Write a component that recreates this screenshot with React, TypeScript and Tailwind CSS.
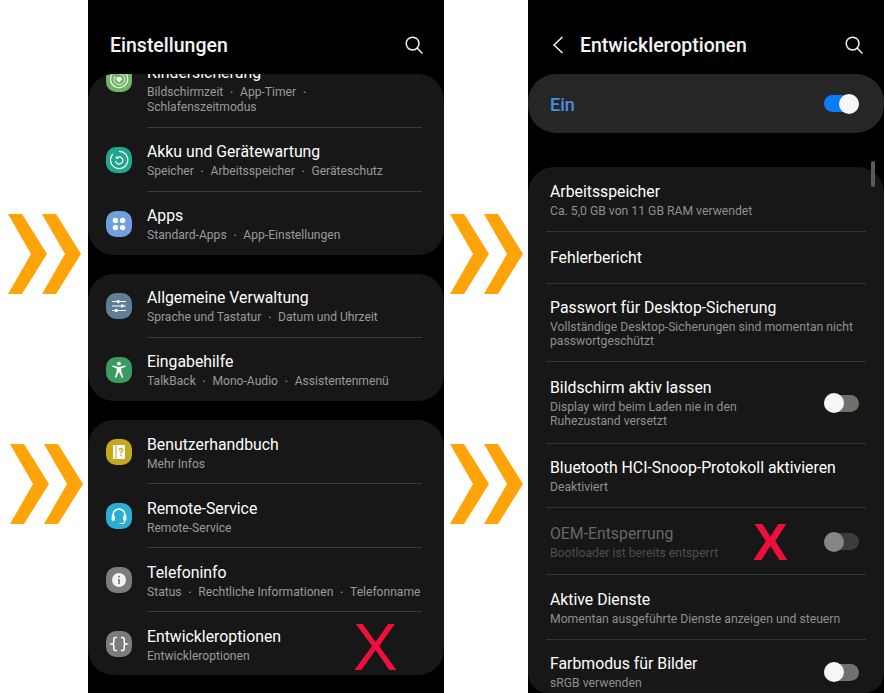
import type { ReactNode } from 'react';

function Chevrons({ className }: { className: string }) {
  return (
    <svg className={className} width="73" height="80" viewBox="0 0 73 80" fill="#ffa408">
      <polygon points="0,0 14,0 39,40 14,80 0,80 23,40" />
      <polygon points="34,0 48,0 73,40 48,80 34,80 57,40" />
    </svg>
  );
}

function SearchIcon() {
  return (
    <svg width="18" height="18" viewBox="0 0 18 18" fill="none" stroke="#f2f2f2" strokeWidth="1.5">
      <circle cx="7.6" cy="7.6" r="6.4" />
      <path d="M12.3 12.3 L17 17" strokeLinecap="round" />
    </svg>
  );
}

function AppIcon({ color, children }: { color: string; children: ReactNode }) {
  return (
    <div className={`w-[26px] h-[26px] rounded-[10px] shrink-0 flex items-center justify-center ${color}`}>
      <svg width="26" height="26" viewBox="0 0 26 26" fill="none" stroke="white" strokeWidth="1.3">
        {children}
      </svg>
    </div>
  );
}

const icons = {
  family: (
    <>
      <path d="M6.5 7.5 A8.6 8.6 0 1 0 13 4.4" opacity="0.85" />
      <path d="M9 10 A5.4 5.4 0 1 0 13 7.8" opacity="0.85" strokeWidth="1" />
      <path d="M13 16.4 L10.2 13.4 A1.9 1.9 0 0 1 13 11.2 A1.9 1.9 0 0 1 15.8 13.4 Z" fill="white" stroke="none" />
    </>
  ),
  care: (
    <>
      <path d="M7 7 A8.6 8.6 0 1 0 13 4.4" />
      <path d="M10.5 11 A3.6 3.6 0 1 1 9.6 14" />
      <path d="M10 9.5 L10.4 11.6 L12.6 11.2" strokeWidth="1" />
    </>
  ),
  apps: (
    <g fill="white" stroke="none">
      <circle cx="9.4" cy="9.4" r="2.7" />
      <circle cx="16.6" cy="9.4" r="2.7" />
      <circle cx="9.4" cy="16.6" r="2.7" />
      <circle cx="16.6" cy="16.6" r="2.7" />
    </g>
  ),
  general: (
    <>
      <path d="M6 8.5 H20 M6 13 H20 M6 17.5 H20" strokeWidth="1" />
      <g fill="white" stroke="none">
        <rect x="11" y="7" width="2.4" height="3" />
        <rect x="15" y="11.5" width="2.4" height="3" />
        <rect x="9" y="16" width="2.4" height="3" />
      </g>
    </>
  ),
  access: (
    <g fill="white" stroke="none">
      <circle cx="13" cy="6.6" r="1.9" />
      <path d="M6 9.4 L6.5 8.4 L13 10 L19.5 8.4 L20 9.4 L15.2 11.6 L15.4 14.6 L17.2 20.4 L15.8 20.8 L13.4 15.6 H12.6 L10.2 20.8 L8.8 20.4 L10.6 14.6 L10.8 11.6 Z" />
    </g>
  ),
  manual: (
    <>
      <path d="M7 6 H19 V20 H7 Z" fill="white" stroke="none" />
      <path d="M10 6 V20" stroke="#c4a91c" strokeWidth="1" />
      <text x="15" y="16.5" textAnchor="middle" fontSize="10" fontWeight="700" fontFamily="Roboto, sans-serif" fill="#c4a91c" stroke="none">?</text>
    </>
  ),
  remote: (
    <>
      <path d="M7 15 V12 A6 6 0 0 1 19 12 V15" strokeWidth="1.7" />
      <rect x="5.6" y="12.4" width="3.4" height="5.4" rx="1.2" fill="white" stroke="none" />
      <rect x="17" y="12.4" width="3.4" height="5.4" rx="1.2" fill="white" stroke="none" />
      <path d="M18.6 17.5 V19 A1.5 1.5 0 0 1 17 20.4 H13.5" strokeWidth="1" />
    </>
  ),
  info: (
    <>
      <circle cx="13" cy="13" r="7" fill="#f2f2f2" stroke="none" />
      <circle cx="13" cy="9.8" r="1" fill="#7c7c7c" stroke="none" />
      <path d="M13 12 V17" stroke="#7c7c7c" strokeWidth="1.7" />
    </>
  ),
  dev: (
    <>
      <path d="M11 6.5 H9.4 A1.6 1.6 0 0 0 7.8 8.1 V11 A1.9 1.9 0 0 1 5.4 13 A1.9 1.9 0 0 1 7.8 15 V17.9 A1.6 1.6 0 0 0 9.4 19.5 H11" strokeWidth="1.5" />
      <path d="M15 6.5 H16.6 A1.6 1.6 0 0 1 18.2 8.1 V11 A1.9 1.9 0 0 0 20.6 13 A1.9 1.9 0 0 0 18.2 15 V17.9 A1.6 1.6 0 0 1 16.6 19.5 H15" strokeWidth="1.5" />
    </>
  ),
};

function Sep() {
  return <span className="text-[8px] align-[1px] mx-[7px]">•</span>;
}

function Sub({ parts, trailing }: { parts: string[]; trailing?: boolean }) {
  return (
    <div className="text-[12.1px] leading-[15px] text-[#9a9a9a] whitespace-nowrap">
      {parts.map((p, i) => (
        <span key={p}>
          {i > 0 && <Sep />}
          {p}
        </span>
      ))}
      {trailing && <Sep />}
    </div>
  );
}

function SettingRow({
  icon,
  title,
  parts,
  color,
  last,
  offset = '',
}: {
  icon: ReactNode;
  title: string;
  parts: string[];
  color: string;
  last?: boolean;
  offset?: string;
}) {
  return (
    <div className={`relative flex items-center pl-[18px] ${last ? 'h-[63px]' : 'h-[64px]'}`}>
      <AppIcon color={color}>{icon}</AppIcon>
      <div className={`ml-[15px] ${offset}`}>
        <div className="text-[15.8px] leading-[20px] mb-[2px] text-white whitespace-nowrap">{title}</div>
        <Sub parts={parts} />
      </div>
      {!last && <div className="absolute left-[59px] right-[22px] bottom-0 h-px bg-[#3a3a3a]" />}
    </div>
  );
}

function Toggle({ state }: { state: 'on' | 'off' | 'disabled' }) {
  const track = state === 'on' ? 'bg-[#0a7cf5] justify-end' : state === 'off' ? 'bg-[#70716a] justify-start' : 'bg-[#3c3c38] justify-start';
  const thumb = state === 'disabled' ? 'bg-[#868686]' : 'bg-[#f7f7f7]';
  return (
    <div className={`w-[35px] h-[17px] rounded-full flex items-center shrink-0 ${track}`}>
      <div className={`w-[20px] h-[20px] rounded-full ${thumb}`} />
    </div>
  );
}

function DevRow({
  title,
  sub,
  height,
  toggle,
  disabled,
  last,
  offset = '',
}: {
  title: string;
  sub?: string[];
  height: string;
  toggle?: 'off' | 'disabled';
  disabled?: boolean;
  last?: boolean;
  offset?: string;
}) {
  return (
    <div className={`relative flex items-center pl-[22px] pr-[25px] ${height}`}>
      <div className={`flex-1 ${offset}`}>
        <div className={`text-[15.8px] leading-[20px] whitespace-nowrap ${sub ? 'mb-[2px]' : ''} ${disabled ? 'text-[#666666]' : 'text-white'}`}>{title}</div>
        {sub?.map((s) => (
          <div key={s} className={`text-[12.2px] leading-[14.5px] whitespace-nowrap ${disabled ? 'text-[#4e4e4e]' : 'text-[#8f8f8f]'}`}>
            {s}
          </div>
        ))}
      </div>
      {toggle && <Toggle state={toggle} />}
      {!last && <div className="absolute left-[18px] right-[18px] bottom-0 h-px bg-[#333333]" />}
    </div>
  );
}

function RedX({ className }: { className: string }) {
  return <div className={`absolute text-[#ee0f3d] leading-none font-['Liberation_Sans',sans-serif] ${className}`}>X</div>;
}

export default function App() {
  return (
    <div className="w-[885px] h-[693px] overflow-hidden bg-white flex font-['Roboto',sans-serif]">
      <div className="w-[88px] shrink-0 pt-[214px] flex flex-col gap-[150px]">
        <Chevrons className="ml-[8px]" />
        <Chevrons className="ml-[10px]" />
      </div>

      {/* Einstellungen */}
      <div className="relative w-[356px] shrink-0 bg-black">
        <div className="h-[74px] flex items-center justify-between pl-[22px] pr-[21px] pt-[16px]">
          <div className="mt-[2px] text-[19.5px] font-medium leading-[28px] text-[#f5f5f5]">Einstellungen</div>
          <SearchIcon />
        </div>
        <div className="rounded-[26px] bg-[#171717] overflow-hidden">
          <div className="relative h-[54px] flex items-end pl-[18px] overflow-hidden">
            <div className="mb-[36px]">
              <AppIcon color="bg-[#6fb565]">{icons.family}</AppIcon>
            </div>
            <div className="ml-[15px] pb-[14px]">
              <div className="text-[15.8px] leading-[20px] mb-[2px] text-white">Kindersicherung</div>
              <Sub parts={['Bildschirmzeit', 'App-Timer']} trailing />
              <div className="text-[12.1px] leading-[14px] text-[#9a9a9a]">Schlafenszeitmodus</div>
            </div>
            <div className="absolute left-[59px] right-[22px] bottom-0 h-px bg-[#3a3a3a]" />
          </div>
          <SettingRow icon={icons.care} color="bg-[#1fa68f]" title="Akku und Gerätewartung" parts={['Speicher', 'Arbeitsspeicher', 'Geräteschutz']} />
          <SettingRow icon={icons.apps} color="bg-[#6f9fe0]" title="Apps" parts={['Standard-Apps', 'App-Einstellungen']} last offset="mt-[2px]" />
        </div>
        <div className="mt-[19px] rounded-[26px] bg-[#171717] overflow-hidden">
          <SettingRow icon={icons.general} color="bg-[#5f7f97]" title="Allgemeine Verwaltung" parts={['Sprache und Tastatur', 'Datum und Uhrzeit']} />
          <SettingRow icon={icons.access} color="bg-[#3a9a60]" title="Eingabehilfe" parts={['TalkBack', 'Mono-Audio', 'Assistentenmenü']} last offset="mt-[2px]" />
        </div>
        <div className="mt-[19px] rounded-[26px] bg-[#171717] overflow-hidden">
          <SettingRow icon={icons.manual} color="bg-[#c4a91c]" title="Benutzerhandbuch" parts={['Mehr Infos']} offset="mt-[2px]" />
          <SettingRow icon={icons.remote} color="bg-[#29aed6]" title="Remote-Service" parts={['Remote-Service']} offset="mt-[2px]" />
          <SettingRow icon={icons.info} color="bg-[#7c7c7c]" title="Telefoninfo" parts={['Status', 'Rechtliche Informationen', 'Telefonname']} offset="mt-[2px]" />
          <SettingRow icon={icons.dev} color="bg-[#7c7c7c]" title="Entwickleroptionen" parts={['Entwickleroptionen']} last offset="mt-[4px]" />
        </div>
        <RedX className="left-[265px] top-[613px] text-[67px]" />
      </div>

      <div className="w-[84px] shrink-0 pt-[214px] flex flex-col gap-[150px]">
        <Chevrons className="ml-[6px]" />
        <Chevrons className="ml-[6px]" />
      </div>

      {/* Entwickleroptionen */}
      <div className="relative w-[356px] shrink-0 bg-black">
        <div className="h-[74px] flex items-center pl-[24px] pr-[21px] pt-[16px]">
          <svg width="12" height="18" viewBox="0 0 12 18" fill="none" stroke="#f2f2f2" strokeWidth="1.5">
            <path d="M10.5 1 L2 9 L10.5 17" />
          </svg>
          <div className="mt-[2px] ml-[16px] flex-1 text-[19.5px] font-medium leading-[28px] text-[#f5f5f5]">Entwickleroptionen</div>
          <SearchIcon />
        </div>
        <div className="h-[59px] rounded-[28px] bg-[#262626] flex items-center justify-between pl-[22px] pr-[25px]">
          <div className="mt-[1px] text-[18px] font-medium text-[#4a8fdf]">Ein</div>
          <Toggle state="on" />
        </div>
        <div className="mt-[34px] h-[526px] rounded-t-[26px] rounded-b-[20px] bg-[#171717] overflow-hidden">
          <DevRow height="h-[65px]" title="Arbeitsspeicher" sub={['Ca. 5,0 GB von 11 GB RAM verwendet']} offset="mt-[2px]" />
          <DevRow height="h-[52px]" title="Fehlerbericht" />
          <DevRow height="h-[78px]" title="Passwort für Desktop-Sicherung" sub={['Vollständige Desktop-Sicherungen sind momentan nicht', 'passwortgeschützt']} />
          <DevRow height="h-[82px]" title="Bildschirm aktiv lassen" sub={['Display wird beim Laden nie in den', 'Ruhezustand versetzt']} toggle="off" />
          <DevRow height="h-[64px]" title="Bluetooth HCI-Snoop-Protokoll aktivieren" sub={['Deaktiviert']} />
          <DevRow height="h-[67px]" title="OEM-Entsperrung" sub={['Bootloader ist bereits entsperrt']} toggle="disabled" disabled offset="mt-[2px]" />
          <DevRow height="h-[65px]" title="Aktive Dienste" sub={['Momentan ausgeführte Dienste anzeigen und steuern']} offset="mt-[2px]" />
          <DevRow height="h-[64px]" title="Farbmodus für Bilder" sub={['sRGB verwenden']} toggle="off" last />
        </div>
        <div className="absolute left-[343px] top-[161px] w-[4px] h-[26px] rounded-full bg-[#5a5a5a]" />
        <RedX className="left-[225px] top-[516px] text-[52px] font-bold" />
      </div>
    </div>
  );
}
